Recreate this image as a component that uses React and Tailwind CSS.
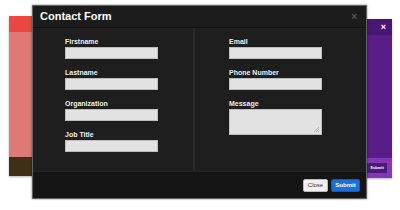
import React from "react";

function Field({ label, tall }) {
  return (
    <div className="flex flex-col">
      <label className="text-[7px] leading-[9px] font-bold text-[#eeeeee] mb-[1px]">{label}</label>
      {tall ? (
        <div className="relative w-[93px] h-[26px] bg-[#e2e2e2] border border-[#bdbdbd]">
          <svg className="absolute right-[2px] bottom-[2px]" width="5" height="5" viewBox="0 0 5 5">
            <path d="M0 5 L5 0 M2 5 L5 2 M4 5 L5 4" stroke="#999" strokeWidth="0.7" />
          </svg>
        </div>
      ) : (
        <div className="w-[93px] h-[12px] bg-[#e2e2e2] border border-[#bdbdbd]" />
      )}
    </div>
  );
}

export default function App() {
  return (
    <div
      className="relative w-[400px] h-[210px] bg-white overflow-hidden"
      style={{ fontFamily: '"Liberation Sans", Arial, sans-serif' }}
    >
      {/* red card behind */}
      <div className="absolute left-[9px] top-[16px] w-[120px] h-[160px] flex flex-col shadow-[0_1px_2px_rgba(0,0,0,0.3)]">
        <div className="h-[16px] bg-[#e8483d]" />
        <div className="flex-1 bg-[#e07876]" />
        <div className="h-[19px] bg-[#3e2f15]" />
      </div>

      {/* purple card behind */}
      <div className="absolute left-[270px] top-[19px] w-[122px] h-[159px] flex flex-col shadow-[0_1px_2px_rgba(0,0,0,0.3)]">
        <div className="h-[16px] bg-[#4a1675] flex items-center justify-end pr-[6px]">
          <span className="text-white text-[9px] font-bold leading-none">×</span>
        </div>
        <div className="flex-1 bg-[#5a1d88]" />
        <div className="h-[20px] bg-[#8537b8] flex items-center justify-end pr-[5px]">
          <div className="w-[20px] h-[10px] bg-[#4b1a78] text-white text-[4px] font-bold flex items-center justify-center">
            Submit
          </div>
        </div>
      </div>

      {/* modal */}
      <div className="absolute left-[32px] top-[5px] w-[335px] h-[194px] flex flex-col bg-[#1e1e1e] shadow-[0_0_2px_rgba(0,0,0,0.5)] border border-[#c8c8c8]/40">
        <div className="h-[22px] flex items-center justify-between px-[7px] bg-[#1c1c1c] border-b border-[#111]">
          <span className="text-white text-[11px] font-bold">Contact Form</span>
          <span className="text-[#555] text-[10px] font-bold leading-none pr-[2px]">×</span>
        </div>
        <div className="flex-1 flex">
          <div className="w-[160px] pl-[32px] pt-[9px] flex flex-col gap-[9px]">
            <Field label="Firstname" />
            <Field label="Lastname" />
            <Field label="Organization" />
            <Field label="Job Title" />
          </div>
          <div className="w-[2px] bg-[#2a2a2a]" />
          <div className="flex-1 pl-[34px] pt-[9px] flex flex-col gap-[9px]">
            <Field label="Email" />
            <Field label="Phone Number" />
            <Field label="Message" tall />
          </div>
        </div>
        <div className="h-[27px] bg-[#151515] border-t border-[#222] flex items-center justify-end gap-[3px] pr-[6px]">
          <button className="w-[25px] h-[13px] bg-[#f0f0f0] border border-[#bbb] rounded-[2px] text-[6px] text-[#333] flex items-center justify-center">
            Close
          </button>
          <button className="w-[29px] h-[13px] bg-[#1a6fdb] border border-[#155ab5] rounded-[2px] text-[6px] font-bold text-white flex items-center justify-center">
            Submit
          </button>
        </div>
      </div>
    </div>
  );
}
